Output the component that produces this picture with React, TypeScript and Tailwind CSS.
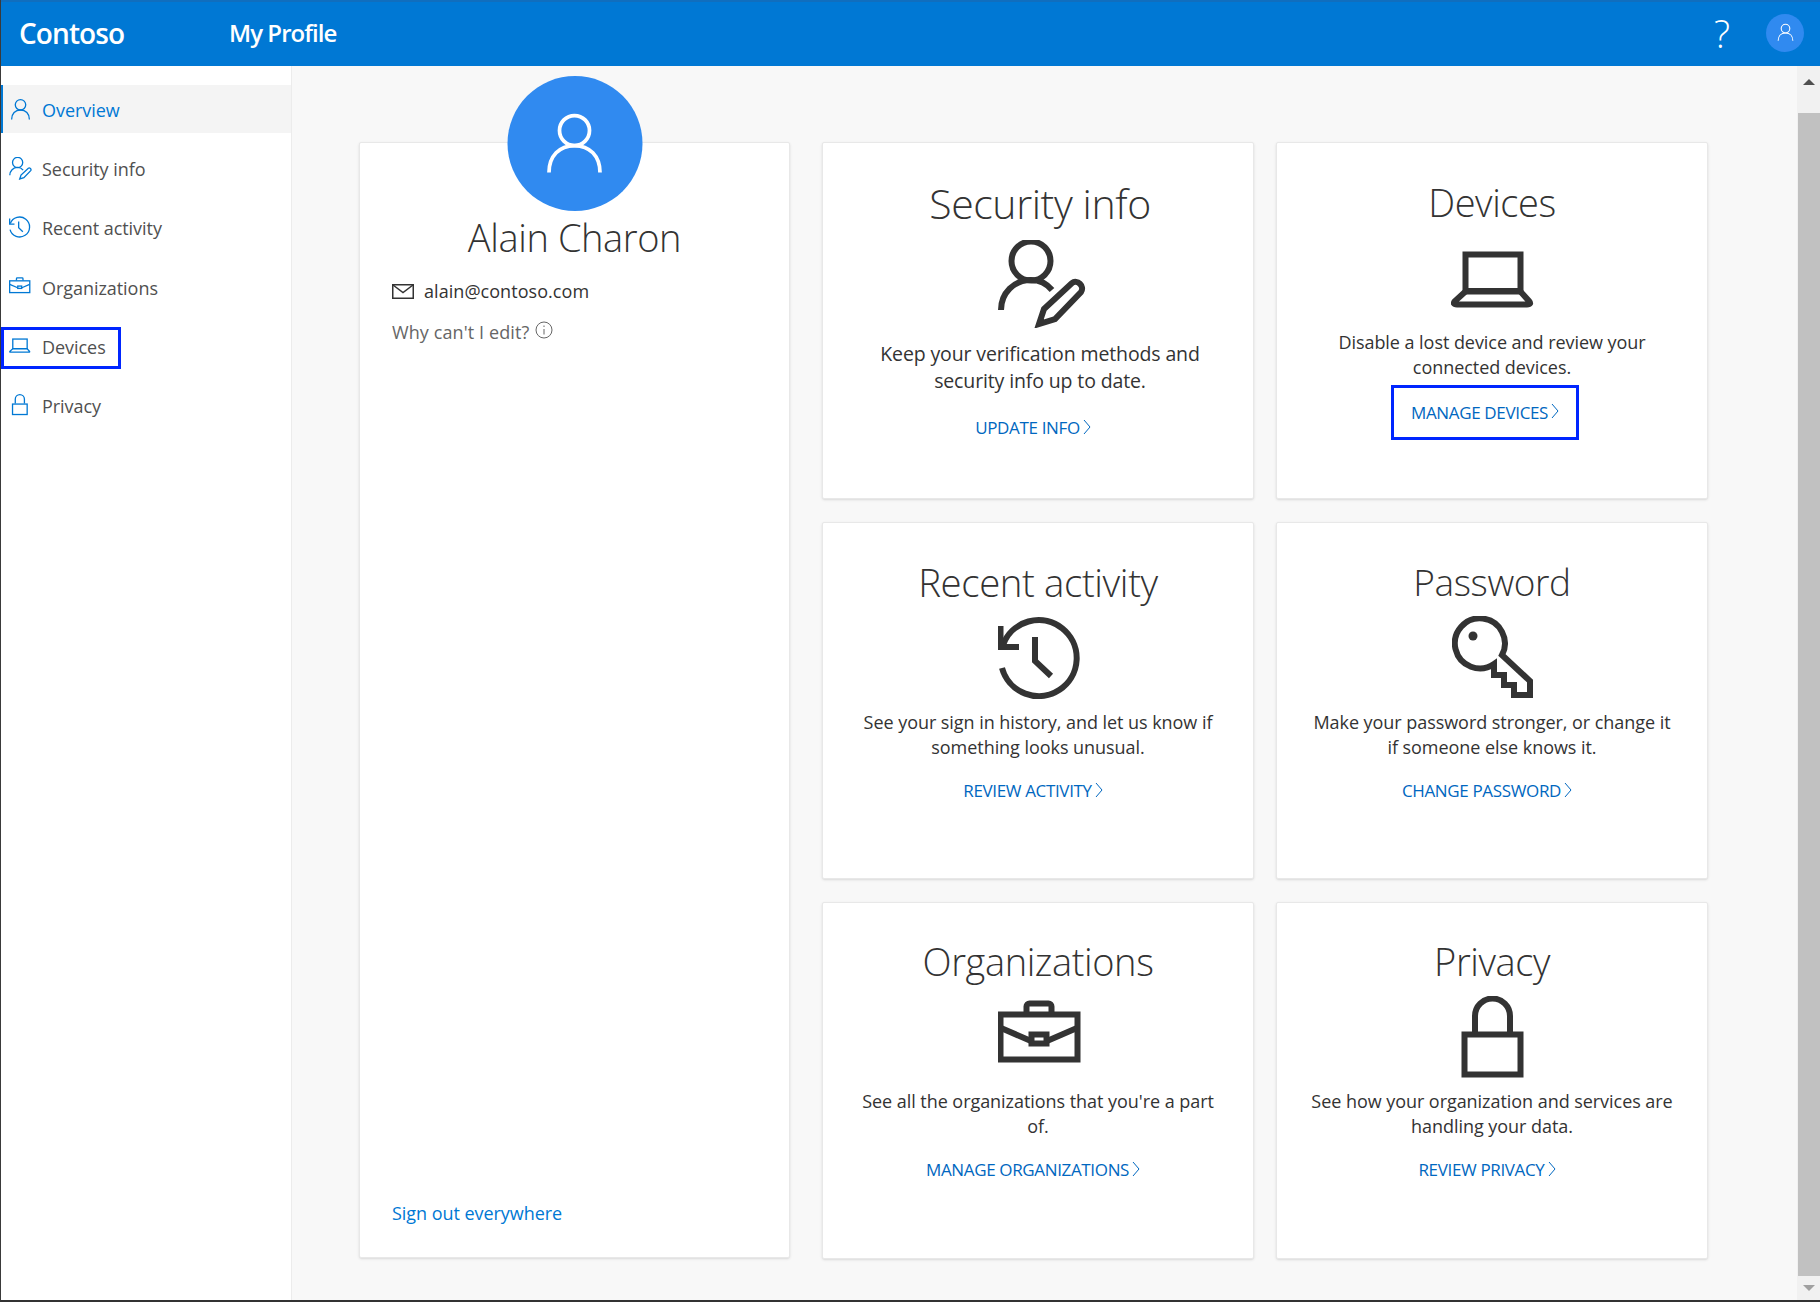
type IconName = "user" | "security" | "clock" | "briefcase" | "laptop" | "lock" | "key";

// all icons share one 88 box so the sidebar and the cards can reuse them
function Icon({ name, className, weight = 5 }: { name: IconName; className: string; weight?: number }) {
  return (
    <svg viewBox="0 0 88 88" fill="none" stroke="currentColor" strokeWidth={weight} className={className}>
      {name === "user" && (
        <>
          <circle cx="44" cy="26" r="20" />
          <path d="M10 82 C10 60 24 46 44 46 C64 46 78 60 78 82" />
        </>
      )}
      {name === "security" && (
        <>
          <circle cx="33" cy="21" r="19.5" />
          <path d="M3 70 C3 53 16 40 33 40 C42 40 49 44 54 50" />
          <path d="M41 84 L46 69 L74 43 C79 39 87 46 83 52 L57 79 Z" />
        </>
      )}
      {name === "clock" && (
        <>
          <path d="M5 29 A38 38 0 1 1 4 52" />
          <path d="M2.5 10 V31 H21" />
          <path d="M37 21 V45 L53 60" />
        </>
      )}
      {name === "briefcase" && (
        <>
          <rect x="2.5" y="18.5" width="77" height="45" />
          <path d="M28.5 17 V10.5 A3 3 0 0 1 31.5 7.5 H50.5 A3 3 0 0 1 53.5 10.5 V17" />
          <rect x="33.5" y="38.5" width="15" height="9" />
          <path d="M3 32 L33 45 M49 45 L79 32" />
        </>
      )}
      {name === "laptop" && (
        <>
          <rect x="14.5" y="15.5" width="55" height="37" />
          <path d="M15 52 H69 L78 62 Q81 65.5 76 65.5 H6 Q1 65.5 4 62 Z" />
        </>
      )}
      {name === "lock" && (
        <>
          <rect x="13.5" y="38.5" width="56" height="40" />
          <path d="M24 36 V20 A17.5 17.5 0 0 1 59 20 V36" />
        </>
      )}
      {name === "key" && (
        <>
          <path d="M50 39 A25 25 0 1 0 42 48 V59 H52 V69 H62 V79 H78 V65 Z" />
          <circle cx="21" cy="20" r="4.5" fill="currentColor" stroke="none" />
        </>
      )}
    </svg>
  );
}

function Chevron() {
  return (
    <svg viewBox="0 0 8 16" fill="none" stroke="currentColor" strokeWidth="1" className="w-[8px] h-[16px] mb-[3px] shrink-0">
      <path d="M1 1 L7 8 L1 15" />
    </svg>
  );
}

const navItems: { label: string; icon: IconName; active?: boolean; focused?: boolean }[] = [
  { label: "Overview", icon: "user", active: true },
  { label: "Security info", icon: "security" },
  { label: "Recent activity", icon: "clock" },
  { label: "Organizations", icon: "briefcase" },
  { label: "Devices", icon: "laptop", focused: true },
  { label: "Privacy", icon: "lock" },
];

function Sidebar() {
  return (
    <aside className="w-[291px] shrink-0 bg-white border-r border-[#ececec] pt-[19px] flex flex-col gap-[11.4px]">
      {navItems.map((item) => (
        <div
          key={item.label}
          className={
            item.active
              ? "relative h-[48px] flex items-center pl-[6px] bg-[#f4f4f4] border-l-2 border-[#0078d4] text-[#0078d4]"
              : "relative h-[48px] flex items-center pl-[6px] border-l-2 border-transparent text-[#505050]"
          }
        >
          <Icon name={item.icon} className="w-[23px] h-[23px] text-[#0078d4] shrink-0" />
          <span className="ml-[10px] pt-[2px] text-[18px] tracking-[-0.05px]">{item.label}</span>
          {item.focused && <span className="absolute left-[-2px] top-[4px] w-[120px] h-[42px] border-[3px] border-[#0026ff]" />}
        </div>
      ))}
    </aside>
  );
}

function ProfileCard() {
  return (
    <div className="relative w-[431px] shrink-0 bg-white border border-[#e8e8e8] shadow-sm rounded-[2px] pt-[71px] px-[32px] pb-[32px] flex flex-col">
      <div className="absolute left-1/2 -translate-x-1/2 -top-[67px] w-[135px] h-[135px] rounded-full bg-[#308af0] flex items-center justify-center">
        <Icon name="user" className="w-[66px] h-[66px] text-white" />
      </div>
      <h2 className="text-center text-[38px] leading-[46px] font-light text-[#333] tracking-[-0.4px]">Alain Charon</h2>
      <div className="flex items-center mt-[18px] h-[26px] text-[#333]">
        <svg viewBox="0 0 22 15" fill="none" stroke="currentColor" strokeWidth="1.5" className="w-[22px] h-[15px]">
          <rect x="0.75" y="0.75" width="20.5" height="13.5" />
          <path d="M1 1 L11 8.5 L21 1" />
        </svg>
        <span className="ml-[10px] text-[18px] tracking-[0.05px]">alain@contoso.com</span>
      </div>
      <div className="flex items-center mt-[15px] h-[26px] text-[#666]">
        <span className="text-[18px] tracking-[0.1px]">Why can't I edit?</span>
        <svg viewBox="0 0 18 18" fill="none" stroke="currentColor" strokeWidth="1" className="ml-[6px] mb-[5px] w-[18px] h-[18px]">
          <circle cx="9" cy="9" r="8" />
          <path d="M9 8 V13.5 M9 4.5 V6" />
        </svg>
      </div>
      <a className="mt-auto text-[18px] leading-[24px] tracking-[-0.05px] text-[#0078d4]">Sign out everywhere</a>
    </div>
  );
}

function ActionCard(props: {
  title: string;
  icon: IconName;
  lines: string;
  link: string;
  top: string;
  iconBox: string;
  text: string;
  linkBox: string;
}) {
  return (
    <div className={"bg-white border border-[#e8e8e8] shadow-sm rounded-[2px] flex flex-col items-center " + props.top}>
      <h3 className="leading-[46px] font-light text-[#333] tracking-[-0.4px] whitespace-nowrap">{props.title}</h3>
      <Icon name={props.icon} weight={6} className={"text-[#333] " + props.iconBox} />
      <p className={"text-center text-[#333] whitespace-pre-line " + props.text}>{props.lines}</p>
      <a className={"flex items-center gap-[3px] text-[17px] font-medium leading-[24px] tracking-[-0.35px] text-[#0067c0] whitespace-nowrap " + props.linkBox}>
        {props.link}
        <Chevron />
      </a>
    </div>
  );
}

export default function App() {
  return (
    <div className="h-[1302px] w-[1820px] overflow-hidden flex flex-col bg-[#f8f8f8] border-l border-[#3a3a3a] border-b-2 border-b-[#333] font-['Open_Sans',sans-serif]">
      <header className="h-[66px] shrink-0 bg-[#0078d4] border-t-2 border-[#106ebe] pb-[3px] flex items-center text-white">
        <div className="w-[228px] pl-[18px] text-[28px] font-semibold tracking-[-0.9px]">Contoso</div>
        <div className="text-[24px] font-semibold tracking-[-0.95px]">My Profile</div>
        <div className="ml-auto mr-[36px] text-[38px] font-light leading-none">?</div>
        <div className="mr-[16px] w-[38px] h-[38px] rounded-full bg-[#308af0] flex items-center justify-center">
          <Icon name="user" className="w-[19px] h-[19px] text-white" />
        </div>
      </header>

      <div className="flex-1 flex min-h-0">
        <Sidebar />

        <main className="flex-1 flex gap-[32px] pl-[67px] pt-[76px] pb-[42px]">
          <ProfileCard />
          <div className="grid grid-cols-[432px_432px] grid-rows-[357px_357px_357px] gap-x-[22px] gap-y-[23px]">
            <ActionCard
              title="Security info"
              icon="security"
              lines={"Keep your verification methods and\nsecurity info up to date."}
              link="UPDATE INFO"
              top="pt-[37px] pl-[4px] [&>h3]:text-[41px]"
              iconBox="w-[88px] h-[88px] mt-[14px] translate-x-[2px]"
              text="mt-[12px] text-[19.5px] leading-[27px] tracking-[-0.13px]"
              linkBox="mt-[22px] -translate-x-[7px]"
            />
            <ActionCard
              title="Devices"
              icon="laptop"
              lines={"Disable a lost device and review your\nconnected devices."}
              link="MANAGE DEVICES"
              top="pt-[36px] [&>h3]:text-[38px]"
              iconBox="w-[88px] h-[88px] mt-[14px] translate-x-[3px]"
              text="mt-[3px] text-[18px] leading-[25px] tracking-[-0.05px]"
              linkBox="mt-[5px] h-[55px] w-[188px] px-[17px] border-[3px] border-[#0026ff] -translate-x-[7px]"
            />
            <ActionCard
              title="Recent activity"
              icon="clock"
              lines={"See your sign in history, and let us know if\nsomething looks unusual."}
              link="REVIEW ACTIVITY"
              top="pt-[36px] [&>h3]:text-[38.4px]"
              iconBox="w-[88px] h-[88px] mt-[11px] translate-x-[4px]"
              text="mt-[6px] text-[18px] leading-[25px] tracking-[-0.05px]"
              linkBox="mt-[19px] -translate-x-[5px]"
            />
            <ActionCard
              title="Password"
              icon="key"
              lines={"Make your password stronger, or change it\nif someone else knows it."}
              link="CHANGE PASSWORD"
              top="pt-[36px] [&>h3]:text-[37px]"
              iconBox="w-[88px] h-[88px] mt-[11px] translate-x-[4px]"
              text="mt-[6px] text-[18px] leading-[25px] tracking-[-0.05px]"
              linkBox="mt-[19px] -translate-x-[5px]"
            />
            <ActionCard
              title="Organizations"
              icon="briefcase"
              lines={"See all the organizations that you're a part\nof."}
              link="MANAGE ORGANIZATIONS"
              top="pt-[35px] [&>h3]:text-[38px]"
              iconBox="w-[88px] h-[88px] mt-[12px] translate-x-[4px]"
              text="mt-[5px] text-[18px] leading-[25px] tracking-[-0.05px]"
              linkBox="mt-[19px] -translate-x-[5px]"
            />
            <ActionCard
              title="Privacy"
              icon="lock"
              lines={"See how your organization and services are\nhandling your data."}
              link="REVIEW PRIVACY"
              top="pt-[35px] [&>h3]:text-[38px]"
              iconBox="w-[88px] h-[88px] mt-[12px] translate-x-[3px]"
              text="mt-[5px] text-[18px] leading-[25px] tracking-[-0.05px]"
              linkBox="mt-[19px] -translate-x-[5px]"
            />
          </div>
        </main>

        {/* scrollbar */}
        <div className="w-[23px] shrink-0 bg-[#f1f1f1] flex flex-col items-center">
          <div className="h-[47px] w-full flex items-center justify-center pb-[16px]">
            <div className="w-0 h-0 border-x-[6px] border-x-transparent border-b-[6px] border-b-[#505050]" />
          </div>
          <div className="flex-1 w-[22px] ml-[1px] bg-[#c1c1c1]" />
          <div className="h-[24px] w-full flex items-center justify-center">
            <div className="w-0 h-0 border-x-[6px] border-x-transparent border-t-[6px] border-t-[#a0a0a0]" />
          </div>
        </div>
      </div>
    </div>
  );
}
